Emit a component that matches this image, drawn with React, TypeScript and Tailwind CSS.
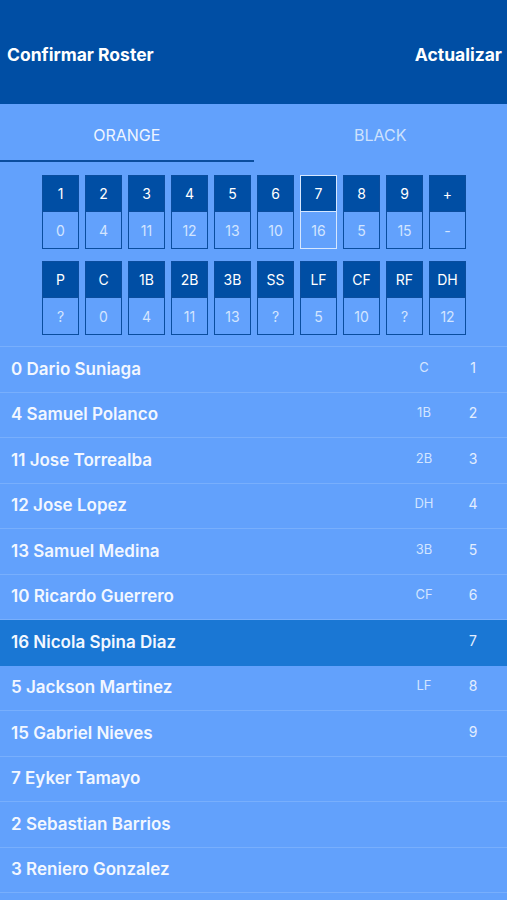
import React from 'react';

const LINEUP = [
  { top: '1', bottom: '0' },
  { top: '2', bottom: '4' },
  { top: '3', bottom: '11' },
  { top: '4', bottom: '12' },
  { top: '5', bottom: '13' },
  { top: '6', bottom: '10' },
  { top: '7', bottom: '16', selected: true },
  { top: '8', bottom: '5' },
  { top: '9', bottom: '15' },
  { top: '+', bottom: '-' },
];

const POSITIONS = [
  { top: 'P', bottom: '?' },
  { top: 'C', bottom: '0' },
  { top: '1B', bottom: '4' },
  { top: '2B', bottom: '11' },
  { top: '3B', bottom: '13' },
  { top: 'SS', bottom: '?' },
  { top: 'LF', bottom: '5' },
  { top: 'CF', bottom: '10' },
  { top: 'RF', bottom: '?' },
  { top: 'DH', bottom: '12' },
];

const PLAYERS = [
  { name: '0 Dario Suniaga', pos: 'C', order: '1' },
  { name: '4 Samuel Polanco', pos: '1B', order: '2' },
  { name: '11 Jose Torrealba', pos: '2B', order: '3' },
  { name: '12 Jose Lopez', pos: 'DH', order: '4' },
  { name: '13 Samuel Medina', pos: '3B', order: '5' },
  { name: '10 Ricardo Guerrero', pos: 'CF', order: '6' },
  { name: '16 Nicola Spina Diaz', pos: '', order: '7', active: true },
  { name: '5 Jackson Martinez', pos: 'LF', order: '8' },
  { name: '15 Gabriel Nieves', pos: '', order: '9' },
  { name: '7 Eyker Tamayo', pos: '', order: '' },
  { name: '2 Sebastian Barrios', pos: '', order: '' },
  { name: '3 Reniero Gonzalez', pos: '', order: '' },
];

type Slot = { top: string; bottom: string; selected?: boolean };

const SlotBox = ({ top, bottom, selected }: Slot) => (
  <div
    className={`flex flex-col w-[37px] h-[74px] border ${
      selected ? 'border-[#d6e7ff]' : 'border-[#0a4d9e]'
    }`}
  >
    <div
      className={`flex items-center justify-center h-[36px] bg-[#004ea4] text-[14px] text-white ${
        selected ? 'border-b border-[#d6e7ff]' : 'border-b border-[#0a4d9e]'
      }`}
    >
      {top}
    </div>
    <div className="flex items-center justify-center flex-1 text-[14px] text-[#d3e5ff]">
      {bottom}
    </div>
  </div>
);

const App: React.FC = () => {
  return (
    <div
      className="w-[507px] h-[900px] overflow-hidden bg-[#62a1fc]"
      style={{ fontFamily: 'Inter, "Liberation Sans", sans-serif' }}
    >
      <header className="flex items-center justify-between h-[104px] pl-[7px] pr-[5px] pt-[6px] bg-[#004ea4] text-white text-[17.5px] font-bold">
        <span>Confirmar Roster</span>
        <span>Actualizar</span>
      </header>

      <nav className="flex h-[59px]">
        <div className="relative flex items-center justify-center w-1/2 pt-[2px] text-[16px] text-[#eef5ff]">
          ORANGE
          <div className="absolute bottom-[1px] left-0 w-[254px] h-[2px] bg-[#0a4d9e]" />
        </div>
        <div className="flex items-center justify-center w-1/2 pt-[2px] text-[16px] text-[#cde1fd]">
          BLACK
        </div>
      </nav>

      <div className="flex flex-col gap-[12px] pt-[12px] pl-[42px] pb-[11px]">
        <div className="flex gap-[6px]">
          {LINEUP.map((s) => (
            <SlotBox key={s.top} {...s} />
          ))}
        </div>
        <div className="flex gap-[6px]">
          {POSITIONS.map((s) => (
            <SlotBox key={s.top} {...s} />
          ))}
        </div>
      </div>

      <ul className="border-t border-[#78affd]">
        {PLAYERS.map((p) => (
          <li
            key={p.name}
            className={`flex items-center h-[45.5px] pl-[11px] border-b ${
              p.active ? 'bg-[#1a77d4] border-[#1a77d4]' : 'border-[#78affd]'
            }`}
          >
            <span className="flex-1 text-[17px] font-semibold text-[#f2f7ff]">{p.name}</span>
            <span className="w-[30px] mr-[24px] pb-[4px] text-center text-[13px] text-[#d3e5ff]">
              {p.pos}
            </span>
            <span className="w-[20px] mr-[24px] pb-[4px] text-center text-[14px] text-[#e3eeff]">
              {p.order}
            </span>
          </li>
        ))}
      </ul>
    </div>
  );
};

export default App;
